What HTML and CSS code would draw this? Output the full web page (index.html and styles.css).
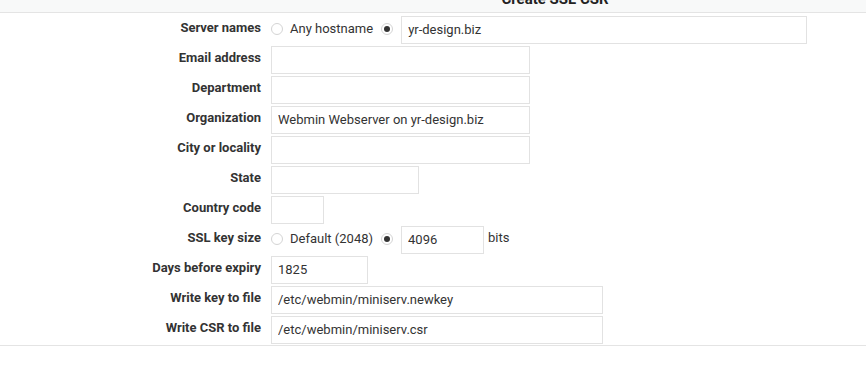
FILE: index.html
```html
<!DOCTYPE html>
<html lang="en">
<head>
  <meta charset="UTF-8">
  <title>Create SSL CSR</title>
  <link rel="stylesheet" href="styles.css">
</head>
<body>
  <div class="header">
    <h1 class="title">Create SSL CSR</h1>
  </div>

  <form class="form">
    <label class="label">Server names</label>
    <div class="field">
      <span class="radio"></span>
      <span class="opt">Any hostname</span>
      <span class="radio checked"></span>
      <input class="text w-host" type="text" value="yr-design.biz">
    </div>

    <label class="label">Email address</label>
    <div class="field"><input class="text w-mid" type="text" value=""></div>

    <label class="label">Department</label>
    <div class="field"><input class="text w-mid" type="text" value=""></div>

    <label class="label">Organization</label>
    <div class="field"><input class="text w-mid" type="text" value="Webmin Webserver on yr-design.biz"></div>

    <label class="label">City or locality</label>
    <div class="field"><input class="text w-mid" type="text" value=""></div>

    <label class="label">State</label>
    <div class="field"><input class="text w-state" type="text" value=""></div>

    <label class="label">Country code</label>
    <div class="field"><input class="text w-cc" type="text" value=""></div>

    <label class="label">SSL key size</label>
    <div class="field">
      <span class="radio"></span>
      <span class="opt">Default (2048)</span>
      <span class="radio checked"></span>
      <input class="text w-bits" type="text" value="4096">
      <span class="unit">bits</span>
    </div>

    <label class="label">Days before expiry</label>
    <div class="field"><input class="text w-days" type="text" value="1825"></div>

    <label class="label">Write key to file</label>
    <div class="field"><input class="text w-file" type="text" value="/etc/webmin/miniserv.newkey"></div>

    <label class="label">Write CSR to file</label>
    <div class="field"><input class="text w-file" type="text" value="/etc/webmin/miniserv.csr"></div>
  </form>
</body>
</html>
```

FILE: styles.css
```css
body {
  margin: 0;
  font-family: Roboto, "Liberation Sans", sans-serif;
  font-size: 13px;
  color: #333;
  background: #fff;
}
.header {
  height: 12px;
  overflow: hidden;
  display: flex;
  align-items: flex-end;
  justify-content: center;
  padding-left: 244px;
  background: #f8f9f9;
  border-bottom: 1px solid #e4e4e4;
}
.title {
  margin: 0 0 5px 0;
  font-size: 15px;
  line-height: 16px;
  font-weight: 700;
  color: #222;
}
.form {
  display: grid;
  grid-template-columns: 261px 1fr;
  grid-auto-rows: 30px;
  column-gap: 10px;
  padding: 1px 0 1px;
  border-bottom: 1px solid #e4e4e4;
}
.label {
  display: flex;
  align-items: center;
  justify-content: flex-end;
  padding-bottom: 4px;
  font-weight: 700;
  color: #333;
}
.field {
  display: flex;
  align-items: center;
}
.text {
  box-sizing: border-box;
  height: 28px;
  margin: 1px 0 0;
  padding: 0 6px;
  border: 1px solid #e2e2e2;
  border-radius: 0;
  font-family: inherit;
  font-size: 13px;
  color: #333;
  outline: none;
}
.w-host { width: 406px; }
.w-mid { width: 259px; }
.w-state { width: 148px; }
.w-cc { width: 53px; }
.w-bits { width: 83px; }
.w-days { width: 97px; }
.w-file { width: 332px; }
.radio {
  box-sizing: border-box;
  width: 12px;
  height: 12px;
  border: 1px solid #d4d4d4;
  border-radius: 50%;
  position: relative;
  flex-shrink: 0;
  margin-top: -1px;
}
.radio.checked::after {
  content: "";
  position: absolute;
  left: 2px; top: 2px;
  width: 6px; height: 6px;
  border-radius: 50%;
  background: #333;
}
.opt {
  margin: -2px 8px 0 7px;
}
.radio.checked {
  margin-right: 8px;
}
.unit {
  margin-left: 4px;
  margin-top: -3px;
}
```
